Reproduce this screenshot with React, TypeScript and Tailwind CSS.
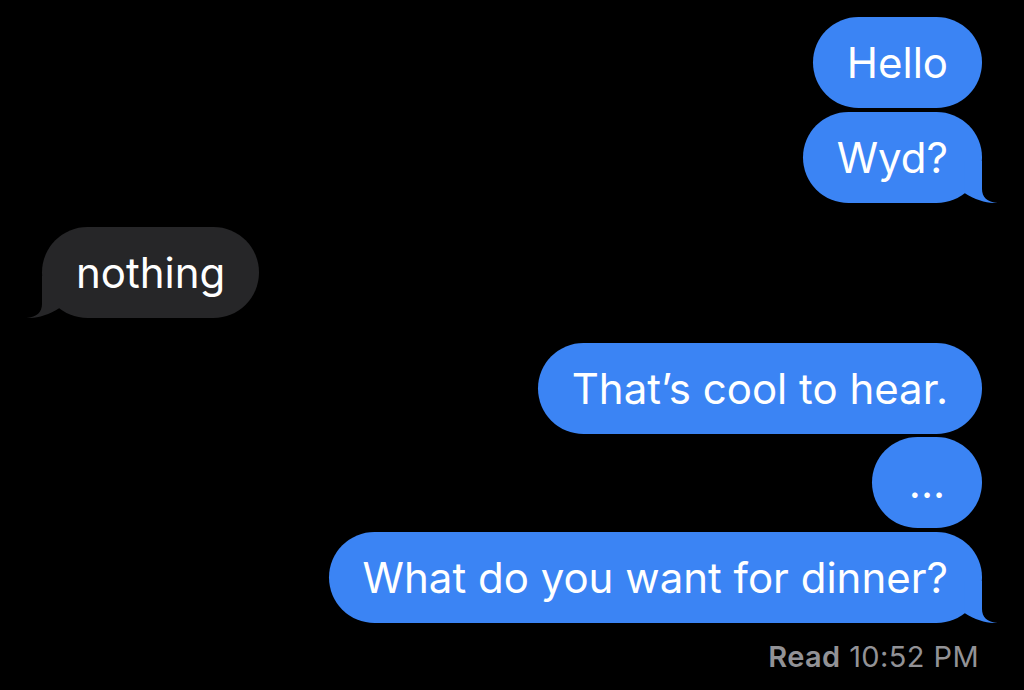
import React from "react";

const BLUE = "#3b84f4";
const GRAY = "#262628";

function TailRight() {
  return (
    <svg
      className="absolute bottom-0 right-[-16px]"
      width="34"
      height="42"
      viewBox="-18 -42 34 42"
      fill={BLUE}
    >
      <path d="M -1 -42 L 0 -42 L 0 -14 C 0 -6, 5 -1, 15.5 0 C 8 0.5, -6 -2, -17.5 -10 L -17.5 -42 Z" />
    </svg>
  );
}

function TailLeft() {
  return (
    <svg
      className="absolute bottom-0 left-[-16px]"
      width="34"
      height="42"
      viewBox="-18 -42 34 42"
      fill={GRAY}
      style={{ transform: "scaleX(-1)" }}
    >
      <path d="M -1 -42 L 0 -42 L 0 -14 C 0 -6, 5 -1, 15.5 0 C 8 0.5, -6 -2, -17.5 -10 L -17.5 -42 Z" />
    </svg>
  );
}

function Out({
  text,
  tail,
  className,
}: {
  text: string;
  tail?: boolean;
  className?: string;
}) {
  return (
    <div
      className={`relative self-end flex items-center justify-center h-[91px] rounded-full bg-[#3b84f4] px-[34px] text-white text-[42px] ${className ?? ""}`}
    >
      <span className="relative z-10">{text}</span>
      {tail && <TailRight />}
    </div>
  );
}

export default function App() {
  return (
    <div
      className="w-[1024px] h-[690px] bg-black overflow-hidden flex flex-col px-[42px] pt-[17px]"
      style={{ fontFamily: "Inter, 'Noto Sans', sans-serif" }}
    >
      <Out text="Hello" />
      <Out text="Wyd?" tail className="mt-[4px]" />
      <div className="relative self-start mt-[24px] flex items-center justify-center h-[91px] rounded-full bg-[#262628] px-[34px] text-white text-[42px]">
        <span className="relative z-10">nothing</span>
        <TailLeft />
      </div>
      <Out text="That’s cool to hear." className="mt-[25px]" />
      <Out text="..." className="mt-[3px] w-[110px] px-0" />
      <Out text="What do you want for dinner?" tail className="mt-[4px]" />
      <div className="self-end mt-[12px] mr-[3px] text-[29px] tracking-[0.4px] text-[#929296]">
        <span className="font-semibold">Read</span> 10:52 PM
      </div>
    </div>
  );
}
